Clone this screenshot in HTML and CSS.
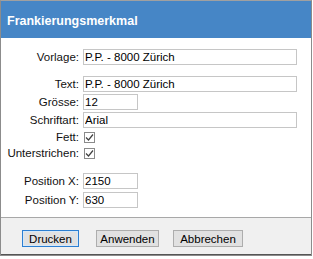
FILE: index.html
```html
<!DOCTYPE html>
<html lang="de">

<head>
    <meta charset="UTF-8">
    <title>Frankierungsmerkmal</title>
    <link rel="stylesheet" href="styles.css">
</head>

<body>
    <div class="dialog">
        <div class="dialog-header">Frankierungsmerkmal</div>

        <div class="dialog-body">
            <div class="row">
                <label class="lbl">Vorlage:</label>
                <input class="field wide" type="text" value="P.P. - 8000 Zürich">
            </div>

            <div class="row spaced">
                <label class="lbl">Text:</label>
                <input class="field wide" type="text" value="P.P. - 8000 Zürich">
            </div>
            <div class="row">
                <label class="lbl">Grösse:</label>
                <input class="field short" type="text" value="12">
            </div>
            <div class="row">
                <label class="lbl">Schriftart:</label>
                <input class="field wide" type="text" value="Arial">
            </div>
            <div class="row check-row">
                <label class="lbl">Fett:</label>
                <span class="check">
                    <svg width="9" height="9" viewBox="0 0 9 9"><path d="M1 4.5 L3.5 7 L8 1.5" fill="none" stroke="#404040" stroke-width="1.2"/></svg>
                </span>
            </div>
            <div class="row check-row">
                <label class="lbl">Unterstrichen:</label>
                <span class="check">
                    <svg width="9" height="9" viewBox="0 0 9 9"><path d="M1 4.5 L3.5 7 L8 1.5" fill="none" stroke="#404040" stroke-width="1.2"/></svg>
                </span>
            </div>

            <div class="row pos-row spaced">
                <label class="lbl">Position X:</label>
                <input class="field short" type="text" value="2150">
            </div>
            <div class="row pos-row">
                <label class="lbl">Position Y:</label>
                <input class="field short" type="text" value="630">
            </div>
        </div>

        <div class="dialog-footer">
            <button class="btn btn-default" style="width: 57px">Drucken</button>
            <button class="btn" style="width: 63px">Anwenden</button>
            <button class="btn" style="width: 70px">Abbrechen</button>
        </div>
    </div>
</body>

</html>
```

FILE: styles.css
```css
body {
    margin: 0;
    padding: 0;
    background-color: #ffffff;
    font-family: "Liberation Sans", Arial, sans-serif;
    font-size: 11.5px;
    color: #111;
}

.dialog {
    width: 310px;
    border: 1px solid #8c8c8c;
    border-top-color: #a0a0a0;
}

.dialog-header {
    height: 37px;
    box-sizing: border-box;
    padding: 13px 0 0 6px;
    background-color: #4686c6;
    color: #ffffff;
    font-weight: bold;
    font-size: 12.5px;
}

.dialog-body {
    background-color: #ffffff;
    padding: 10px 0 8px 0;
    border-bottom: 1px solid #a8a8a8;
}

.row {
    display: flex;
    align-items: center;
    height: 18px;
}

.row.spaced {
    margin-top: 9px;
}

.pos-row {
    height: 19px;
}

.pos-row.spaced {
    margin-top: 10px;
}

.check-row {
    height: 16px;
}

.lbl {
    width: 78px;
    margin-right: 4px;
    text-align: right;
}

.field {
    box-sizing: border-box;
    height: 16px;
    margin: 0;
    padding: 0 1px;
    border: 1px solid #c6c6c6;
    font-family: "Liberation Sans", Arial, sans-serif;
    font-size: 11.5px;
    color: #000;
    outline: none;
}

.wide {
    width: 214px;
}

.short {
    width: 55px;
}

.check {
    box-sizing: border-box;
    width: 11px;
    height: 11px;
    margin-left: 1px;
    border: 1px solid #8a8a8a;
    background-color: #ffffff;
    display: flex;
    align-items: center;
    justify-content: center;
}

.dialog-footer {
    height: 37px;
    box-sizing: border-box;
    padding: 12px 0 0 21px;
    background-color: #f0f0f0;
    border-bottom: 1px solid #555;
    display: flex;
    align-items: flex-start;
    gap: 14px;
}

.btn {
    box-sizing: border-box;
    height: 17px;
    padding: 0;
    border: 1px solid #adadad;
    background-color: #e1e1e1;
    font-family: "Liberation Sans", Arial, sans-serif;
    font-size: 11.5px;
    color: #000;
}

.btn-default {
    border-color: #2c7fd2;
    box-shadow: inset 0 0 0 1px #d6e8f8;
    margin-right: 3px;
}
```
